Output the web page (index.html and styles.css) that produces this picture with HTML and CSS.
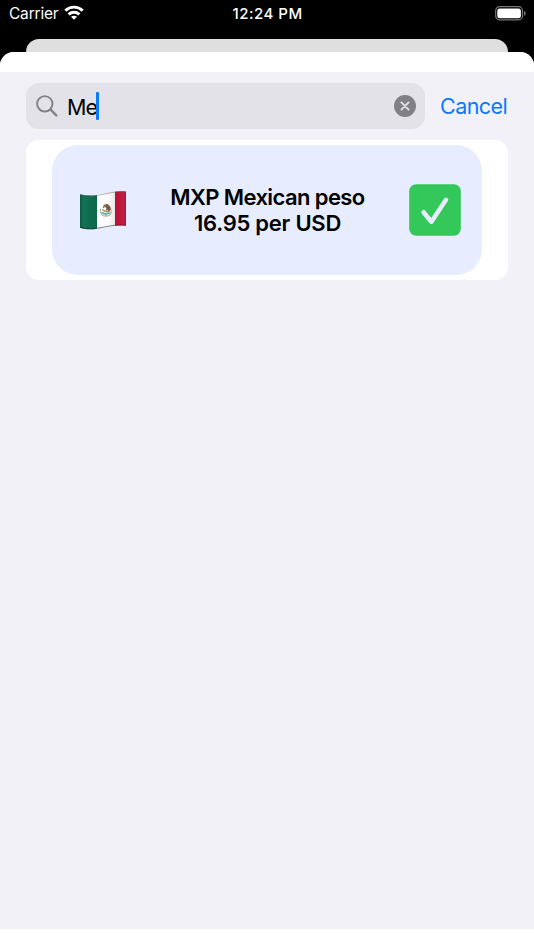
FILE: index.html
```html
<!DOCTYPE html>
<html lang="en">
<head>
<meta charset="utf-8">
<title>Currencies</title>
<link rel="stylesheet" href="styles.css">
</head>
<body>
<div class="phone">
  <header class="status">
    <div class="carrier">
      <span>Carrier</span>
      <svg class="wifi" width="20" height="15" viewBox="0 0 20 15" fill="none" stroke="#fff" stroke-width="2.9">
        <path d="M1.3 5.6C6.2 1 13.8 1 18.7 5.6"/>
        <path d="M4.6 9.3C7.7 6.5 12.3 6.5 15.4 9.3"/>
        <path d="M10 14.8L7 11.8C8.6 10.3 11.4 10.3 13 11.8Z" fill="#fff" stroke="none"/>
      </svg>
    </div>
    <time class="clock">12:24 PM</time>
    <svg class="battery" width="32" height="15" viewBox="0 0 32 15">
      <rect x=".7" y=".7" width="26.8" height="13.1" rx="3.8" fill="none" stroke="#77777a" stroke-width="1.2"/>
      <rect x="2.3" y="2.4" width="23.6" height="9.8" rx="2.3" fill="#fff"/>
      <path d="M29 4.9C31.2 5.5 31.2 9.1 29 9.7Z" fill="#77777a"/>
    </svg>
  </header>
  <div class="back-sheet"></div>
  <main class="sheet">
    <div class="grabber"></div>
    <div class="search-row">
      <div class="field">
        <svg width="22" height="22" viewBox="0 0 22 22" fill="none" stroke="#828287" stroke-linecap="round">
          <circle cx="8.8" cy="8.8" r="7.7" stroke-width="1.9"/>
          <path d="M14.6 14.6L20.3 20.4" stroke-width="2.4"/>
        </svg>
        <span class="query">Me</span><i class="caret"></i>
        <svg class="clear" width="22" height="22" viewBox="0 0 22 22">
          <circle cx="11" cy="11" r="11" fill="#808085"/>
          <path d="M7.4 7.4L14.6 14.6M14.6 7.4L7.4 14.6" stroke="#e3e2e8" stroke-width="1.9" stroke-linecap="round"/>
        </svg>
      </div>
      <span class="cancel">Cancel</span>
    </div>
    <section class="list">
      <article class="currency">
        <svg class="flag" width="48" height="40" viewBox="0 0 48 40">
          <defs>
            <clipPath id="wave"><path d="M1 3.2C8 5 15 5 23 3C31 1 38-.2 47 .4V34.8C38 33.8 31 35.2 24 36.8C16 38.6 8 39 1 36.8Z"/></clipPath>
            <linearGradient id="green"><stop offset="0" stop-color="#07543c"/><stop offset=".25" stop-color="#127253"/><stop offset="1" stop-color="#0b684a"/></linearGradient>
            <linearGradient id="white"><stop offset="0" stop-color="#fff"/><stop offset=".65" stop-color="#fafafa"/><stop offset="1" stop-color="#e9e9e9"/></linearGradient>
            <linearGradient id="red"><stop offset="0" stop-color="#b90f35"/><stop offset=".7" stop-color="#c31d42"/><stop offset="1" stop-color="#9f1231"/></linearGradient>
          </defs>
          <g clip-path="url(#wave)">
            <path fill="url(#green)" d="M0 0H18V40H0Z"/>
            <path fill="url(#white)" d="M18 0H36V40H18Z"/>
            <path fill="url(#red)" d="M36 0H48V40H36Z"/>
            <path d="M1 3.2C8 5 15 5 23 3C31 1 38-.2 47 .4" fill="none" stroke="#555" stroke-opacity=".4" stroke-width="2"/>
            <path d="M47 34.8C38 33.8 31 35.2 24 36.8C16 38.6 8 39 1 36.8" fill="none" stroke="#222" stroke-opacity=".5" stroke-width="2"/>
          </g>
          <g fill="none" stroke-linecap="round">
            <path d="M21.5 18C20.8 22 23 25.2 27 25.2C30.5 25 32.5 22.4 32.4 19" stroke="#a9b894" stroke-width="1.1"/>
            <path d="M23.5 21.8C25.6 23.3 28 23.2 30 22" stroke="#55b4c1" stroke-width="2"/>
            <path d="M23.8 18.8L27 20.5L30 20.3" stroke="#b28a52" stroke-width="1.4"/>
            <path d="M24.6 16.2C25.2 13.8 27.2 13.2 29 14" stroke="#8a6a50" stroke-width="1.5"/>
          </g>
          <path d="M25.4 15.6C28 12.6 32 14.2 31.9 18.4L29.9 20.4L28.7 18.9L26.8 19.2L27.5 17Z" fill="#7a5740"/>
          <circle cx="27" cy="24" r="1" fill="#d6a64c"/>
        </svg>
        <div class="rate"><div class="name">MXP Mexican peso</div><div class="value">16.95 per USD</div></div>
        <svg class="check" width="52" height="52" viewBox="0 0 52 52">
          <rect x=".2" y=".2" width="51.6" height="51.6" rx="7" fill="#34c85a"/>
          <path d="M14.6 28.2L22.4 37.7L37 15.8" fill="none" stroke="#e7ecff" stroke-width="4.5" stroke-linecap="round" stroke-linejoin="round"/>
        </svg>
      </article>
    </section>
  </main>
</div>
</body>
</html>
```
FILE: styles.css
```css
* { box-sizing: border-box; }
body {
  margin: 0;
  background: #fff;
  font-family: Inter, "Liberation Sans", sans-serif;
}
.phone {
  display: flex;
  flex-direction: column;
  height: 929px;
  background: #000;
  overflow: hidden;
}
.status {
  display: grid;
  grid-template-columns: 1fr auto 1fr;
  align-items: center;
  height: 39px;
  padding: 0 7px 11px 9px;
  color: #fff;
  font-size: 15.5px;
  line-height: 28px;
  white-space: nowrap;
}
.carrier { display: flex; align-items: center; gap: 6px; }
.wifi { margin-top: -3px; }
.carrier span { letter-spacing: -0.2px; }
.clock { font-weight: 550; font-size: 15px; letter-spacing: 0.5px; margin-right: 1px; }
.battery { justify-self: end; margin-top: -2px; }
.back-sheet {
  height: 13px;
  margin: 0 26px;
  background: #dfdfdf;
  border-radius: 13px 13px 0 0;
}
.sheet {
  flex: 1;
  background: #f2f1f7;
  border-radius: 14px 14px 0 0;
  overflow: hidden;
}
.grabber { height: 20px; background: #fff; }
.search-row {
  display: flex;
  align-items: center;
  height: 46px;
  margin: 11px 26px 0;
}
.field {
  display: flex;
  align-items: center;
  width: 399px;
  height: 46px;
  padding: 0 9px 0 10px;
  background: #e3e2e8;
  border-radius: 13px;
}
.query { margin-left: 9px; padding-top: 1px; font-size: 21.5px; letter-spacing: -0.9px; }
.caret { width: 3px; height: 28px; margin-left: -1px; background: #077aff; border-radius: 1px; }
.clear { margin-left: auto; }
.cancel {
  margin-left: 15px;
  color: #077aff;
  font-size: 21.5px;
  line-height: 26px;
  padding-bottom: 1px;
  letter-spacing: -0.55px;
}
.list {
  margin: 11px 26px 0;
  padding: 5px 26px;
  height: 140px;
  background: #fff;
  border-radius: 13px;
}
.currency {
  display: grid;
  grid-template-columns: 48px 1fr 52px;
  align-items: center;
  height: 130px;
  padding: 0 21.5px 0 26.5px;
  background: #e7ecff;
  border-radius: 26px;
}
.flag { margin-top: 2px; }
.rate {
  text-align: center;
  font-size: 22px;
  font-weight: 570;
  line-height: 26px;
  white-space: nowrap;
}
.name { letter-spacing: -0.6px; }
.value { letter-spacing: -0.25px; }
```
